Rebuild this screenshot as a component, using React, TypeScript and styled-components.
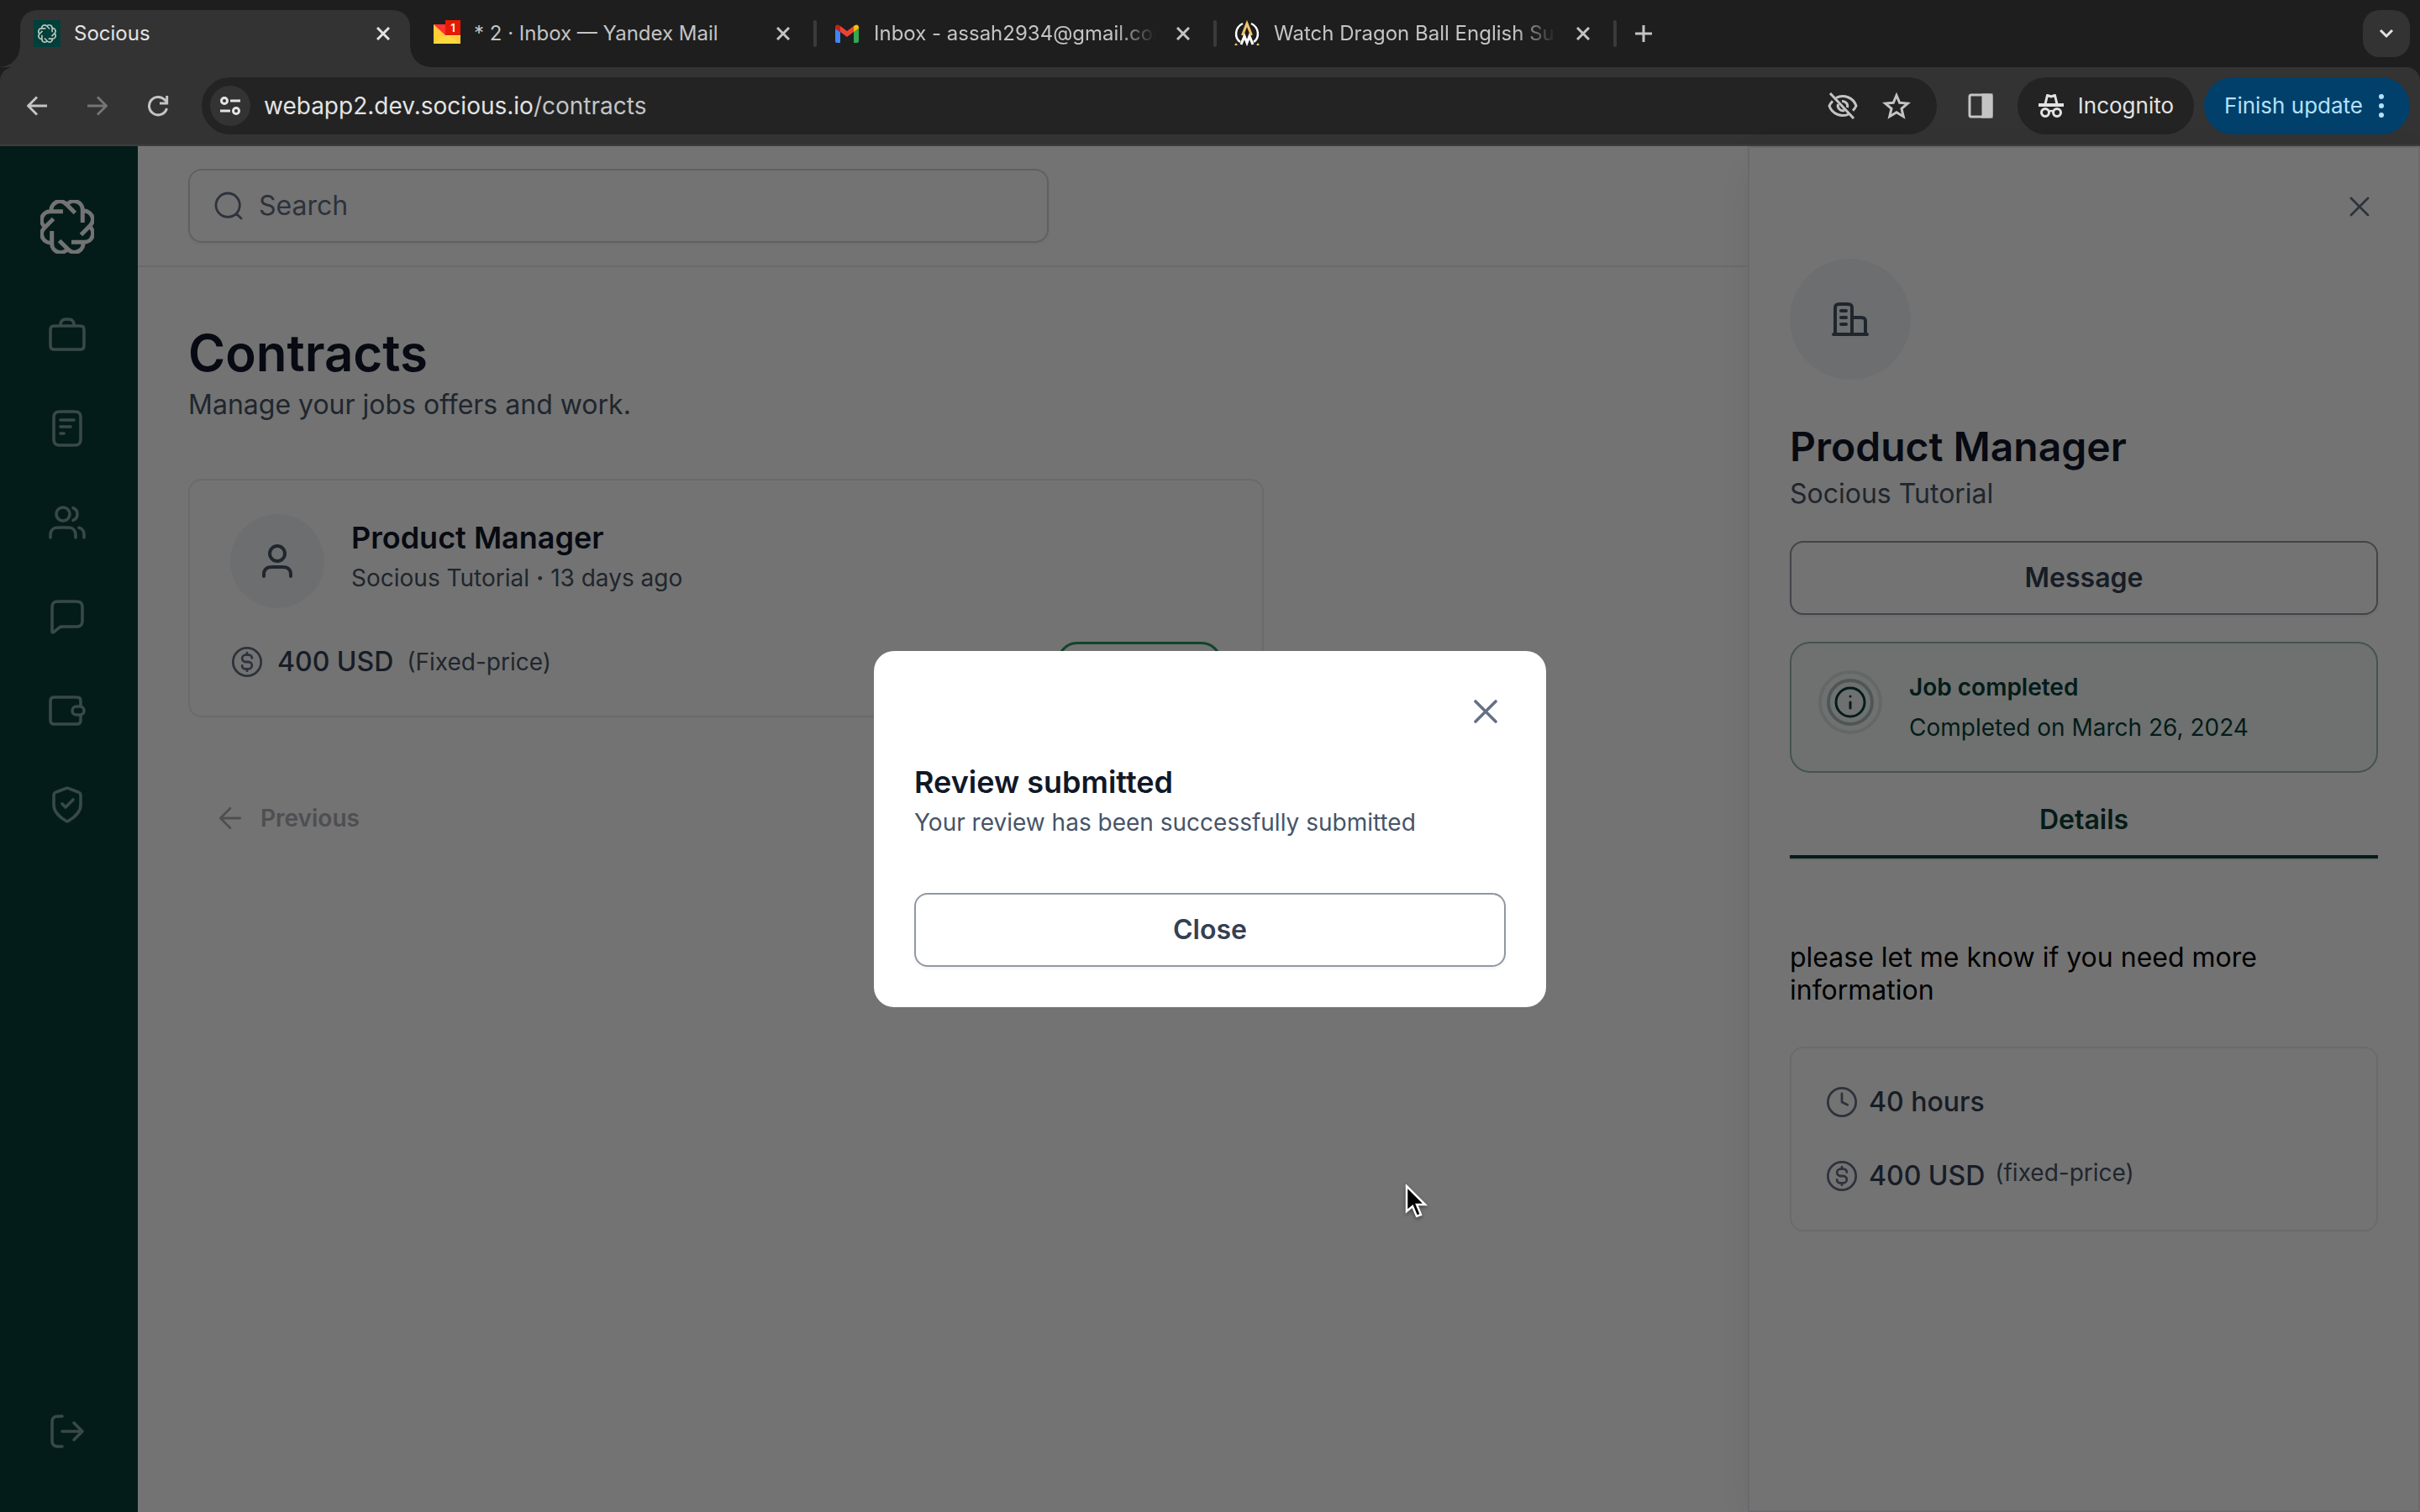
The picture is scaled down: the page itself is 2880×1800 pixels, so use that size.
import React from "react";
import styled, { createGlobalStyle, css } from "styled-components";

const color = {
  strip: "#1e1e1e",
  toolbar: "#333333",
  field: "#232323",
  chromeText: "#e3e3e3",
  chromeMuted: "#c4c4c4",
  gray900: "#101828",
  gray700: "#344054",
  gray600: "#475467",
  gray500: "#667085",
  gray400: "#9197a3",
  gray300: "#d0d5dd",
  gray200: "#eaecf0",
  gray100: "#f2f4f7",
  brand: "#093e38",
  brandIcon: "#7fa39e",
};

const GlobalStyle = createGlobalStyle`
  *, *::before, *::after { box-sizing: border-box; }
  body { margin: 0; font-family: Inter, "Liberation Sans", sans-serif; font-optical-sizing: none; background: #fff; }
  button, input { font: inherit; font-optical-sizing: none; }
  h1, h2, p { margin: 0; }
`;

const Shell = styled.div`
  display: grid;
  grid-template-rows: auto 1fr;
  min-height: 100vh;
`;

/* ---------- browser window ---------- */

const plainButton = css`
  display: inline-flex;
  align-items: center;
  justify-content: center;
  padding: 0;
  border: 0;
  background: none;
  color: inherit;
`;

const Browser = styled.header`
  background: ${color.strip};
  color: ${color.chromeMuted};
`;

const TabStrip = styled.div`
  display: flex;
  align-items: stretch;
  height: 80px;
  padding: 12px 12px 0 24px;
`;

const Tab = styled.div<{ $active?: boolean }>`
  position: relative;
  display: flex;
  align-items: center;
  gap: 16px;
  width: 464px;
  padding: 0 16px 12px;
  border-radius: 20px 20px 0 0;
  font-size: 24px;
  line-height: 32px;
  ${(p) =>
    p.$active &&
    css`
      background: ${color.toolbar};
      color: ${color.chromeText};
      &::before,
      &::after {
        content: "";
        position: absolute;
        bottom: 0;
        width: 24px;
        height: 24px;
      }
      &::before {
        right: 100%;
        background: radial-gradient(circle at 0 0, transparent 23px, ${color.toolbar} 24px);
      }
      &::after {
        left: 100%;
        background: radial-gradient(circle at 100% 0, transparent 23px, ${color.toolbar} 24px);
      }
    `}
`;

const TabTitle = styled.span<{ $fade?: boolean }>`
  flex: 1;
  min-width: 0;
  overflow: hidden;
  white-space: nowrap;
  ${(p) =>
    p.$fade &&
    css`
      mask-image: linear-gradient(to right, #000 calc(100% - 48px), transparent);
    `}
`;

const TabClose = styled.button`
  ${plainButton}
  width: 32px;
  height: 32px;
`;

const TabGap = styled.span<{ $line?: boolean }>`
  width: 4px;
  height: 32px;
  margin: 12px 4px 0;
  border-radius: 2px;
  background: ${(p) => (p.$line ? "#3a3a3a" : "transparent")};
`;

const NewTab = styled.button`
  ${plainButton}
  width: 56px;
  height: 56px;
`;

const TabSearch = styled.button`
  ${plainButton}
  width: 56px;
  height: 56px;
  margin-left: auto;
  border-radius: 20px;
  background: ${color.toolbar};
  color: ${color.chromeText};
`;

const Toolbar = styled.div`
  display: flex;
  align-items: center;
  height: 94px;
  padding: 0 12px 0 8px;
  border-bottom: 2px solid #3d3d3d;
  border-radius: 16px 16px 0 0;
  background: ${color.toolbar};
`;

const NavButton = styled.button<{ $off?: boolean }>`
  ${plainButton}
  width: 72px;
  height: 68px;
  color: ${(p) => (p.$off ? "#757575" : color.chromeMuted)};
`;

const AddressBar = styled.div`
  display: flex;
  flex: 1;
  align-items: center;
  height: 68px;
  margin-left: 16px;
  padding: 0 16px 0 10px;
  border-radius: 34px;
  background: ${color.field};
`;

const SiteInfo = styled.button`
  ${plainButton}
  width: 48px;
  height: 48px;
  border-radius: 50%;
  background: ${color.toolbar};
  color: ${color.chromeText};
`;

const Address = styled.a`
  flex: 1;
  padding-left: 16px;
  color: ${color.chromeMuted};
  font-size: 28px;
  line-height: 40px;
  text-decoration: none;
`;

const Host = styled.span`
  color: ${color.chromeText};
`;

const FieldButton = styled.button`
  ${plainButton}
  width: 64px;
  height: 48px;
`;

const PanelButton = styled.button`
  ${plainButton}
  width: 96px;
  height: 68px;
  padding-left: 8px;
`;

const Chip = styled.button<{ $update?: boolean }>`
  ${plainButton}
  gap: ${(p) => (p.$update ? 12 : 16)}px;
  height: 68px;
  padding: 0 24px;
  border-radius: 34px;
  background: ${(p) => (p.$update ? "#00406a" : color.field)};
  color: ${(p) => (p.$update ? "#b4e0fb" : color.chromeText)};
  font-size: 26px;
  line-height: 32px;
  white-space: nowrap;
  & + & {
    margin-left: 12px;
  }
`;

/* ---------- web page ---------- */

const Page = styled.div`
  position: relative;
  display: flex;
  background: #fff;
`;

const Sidebar = styled.nav`
  display: flex;
  flex-direction: column;
  align-items: center;
  width: 164px;
  padding: 64px 4px 48px 0;
  background: ${color.brand};
  color: ${color.brandIcon};
`;

const NavList = styled.div`
  display: flex;
  flex-direction: column;
  gap: 16px;
  margin-top: 48px;
`;

const NavLink = styled.a<{ $last?: boolean }>`
  display: flex;
  padding: 24px;
  margin-top: ${(p) => (p.$last ? "auto" : "0")};
  color: inherit;
`;

const Main = styled.main`
  flex: 1;
  min-width: 0;
`;

const TopBar = styled.div`
  display: flex;
  align-items: center;
  height: 144px;
  padding: 0 60px;
  border-bottom: 2px solid ${color.gray200};
`;

const SearchBox = styled.label`
  display: flex;
  align-items: center;
  gap: 16px;
  width: 100%;
  max-width: 1024px;
  height: 88px;
  padding: 0 26px;
  border: 2px solid ${color.gray300};
  border-radius: 16px;
  box-shadow: 0 2px 4px rgba(16, 24, 40, 0.05);
  color: ${color.gray500};
`;

const SearchInput = styled.input`
  flex: 1;
  min-width: 0;
  padding: 0;
  border: 0;
  outline: 0;
  background: none;
  color: ${color.gray900};
  font-size: 32px;
  line-height: 48px;
  &::placeholder {
    color: ${color.gray500};
    opacity: 1;
  }
`;

const Content = styled.section`
  padding: 64px 60px;
`;

const PageTitle = styled.h1`
  color: ${color.gray900};
  font-size: 60px;
  font-weight: 600;
  line-height: 76px;
`;

const Lead = styled.p`
  color: ${color.gray600};
  font-size: 32px;
  line-height: 48px;
`;

const Card = styled.article`
  display: flex;
  flex-direction: column;
  gap: 40px;
  border: 2px solid ${color.gray200};
  border-radius: 16px;
`;

const ContractCard = styled(Card)`
  max-width: 1280px;
  margin-top: 64px;
  padding: 40px 48px;
`;

const Row = styled.div<{ $gap: number; $top?: boolean }>`
  display: flex;
  align-items: ${(p) => (p.$top ? "flex-start" : "center")};
  gap: ${(p) => p.$gap}px;
  min-height: 48px;
`;

const Avatar = styled.span<{ $size: number }>`
  display: flex;
  align-items: center;
  justify-content: center;
  width: ${(p) => p.$size}px;
  height: ${(p) => p.$size}px;
  border-radius: 50%;
  background: ${color.gray100};
  color: ${color.gray600};
`;

const CardTitle = styled.h2`
  color: ${color.gray900};
  font-size: 36px;
  font-weight: 600;
  line-height: 56px;
`;

const Small = styled.p<{ $raised?: boolean }>`
  align-self: ${(p) => (p.$raised ? "flex-start" : "auto")};
  color: ${color.gray600};
  font-size: 28px;
  line-height: 40px;
`;

const Amount = styled.span`
  color: ${color.gray700};
  font-size: 32px;
  font-weight: 500;
  line-height: 48px;
`;

const IconBox = styled.span`
  display: flex;
  color: ${color.gray500};
`;

const StatusBadge = styled.span`
  width: 196px;
  height: 48px;
  margin-left: auto;
  border: 3px solid #249a5e;
  border-radius: 24px;
`;

const Previous = styled.button`
  ${plainButton}
  gap: 16px;
  height: 80px;
  margin-top: 80px;
  padding: 0 30px;
  color: #aeafb3;
  font-size: 28px;
  font-weight: 600;
  line-height: 40px;
`;

const Drawer = styled.aside`
  display: flex;
  flex-direction: column;
  width: 800px;
  padding: 48px;
  border: 2px solid ${color.gray200};
  box-shadow: 0 16px 48px rgba(16, 24, 40, 0.06);
`;

const DrawerClose = styled.button`
  ${plainButton}
  align-self: flex-end;
  width: 44px;
  height: 44px;
  margin-bottom: 40px;
  color: ${color.gray500};
`;

const DrawerTitle = styled.h2`
  margin-top: 48px;
  color: ${color.gray900};
  font-size: 48px;
  font-weight: 600;
  line-height: 64px;
`;

const OutlineButton = styled.button`
  ${plainButton}
  width: 100%;
  height: 88px;
  border: 2px solid ${color.gray400};
  border-radius: 16px;
  box-shadow: 0 2px 4px rgba(16, 24, 40, 0.05);
  color: ${color.gray700};
  font-size: 32px;
  font-weight: 600;
  line-height: 48px;
`;

const DrawerActions = styled.div`
  display: flex;
  flex-direction: column;
  gap: 32px;
  margin-top: 32px;
`;

const Alert = styled.div`
  display: flex;
  gap: 32px;
  padding: 32px;
  border: 2px solid #97bbb3;
  border-radius: 24px;
  background: #f4fbf8;
  color: ${color.brand};
`;

const AlertText = styled.div`
  display: flex;
  flex-direction: column;
  gap: 8px;
  font-size: 28px;
  line-height: 40px;
`;

const AlertTitle = styled.p`
  font-weight: 600;
`;

const TabBar = styled.div`
  display: flex;
  border-bottom: 2px solid ${color.gray200};
`;

const DetailsTab = styled.button`
  ${plainButton}
  flex: 1;
  padding-bottom: 18px;
  border-bottom: 4px solid ${color.brand};
  color: ${color.brand};
  font-size: 32px;
  font-weight: 600;
  line-height: 48px;
`;

const Description = styled.p`
  margin-top: 96px;
  color: #000;
  font-size: 32px;
  line-height: 39px;
`;

const TermsCard = styled(Card)`
  margin-top: 48px;
  padding: 40px;
`;

const Overlay = styled.div`
  position: absolute;
  inset: 0;
  display: flex;
  align-items: center;
  justify-content: center;
  background: rgba(0, 0, 0, 0.55);
`;

const Dialog = styled.section`
  display: flex;
  flex-direction: column;
  width: 800px;
  padding: 48px;
  border-radius: 24px;
  background: #fff;
`;

const DialogClose = styled.button`
  ${plainButton}
  align-self: flex-end;
  margin-bottom: 32px;
  color: ${color.gray500};
`;

const DialogActions = styled.div`
  margin-top: 64px;
`;

const Pointer = styled.svg`
  position: absolute;
  left: 1672px;
  top: 1236px;
  filter: drop-shadow(0 2px 2px rgba(0, 0, 0, 0.4));
`;

/* ---------- icons ---------- */

type IconProps = { size: number; d: string; weight?: number };

const Icon = ({ size, d, weight = 2 }: IconProps) => (
  <svg width={size} height={size} viewBox="0 0 24 24" fill="none" stroke="currentColor" strokeWidth={weight} strokeLinecap="round" strokeLinejoin="round" aria-hidden="true">
    <path d={d} />
  </svg>
);

const CIRCLE = "M22 12C22 17.5228 17.5228 22 12 22C6.47715 22 2 17.5228 2 12C2 6.47715 6.47715 2 12 2C17.5228 2 22 6.47715 22 12Z";

const paths = {
  close: "M18 6L6 18M6 6L18 18",
  search: "M21 21L17.5 17.5M20 11.5C20 16.1944 16.1944 20 11.5 20C6.80558 20 3 16.1944 3 11.5C3 6.80558 6.80558 3 11.5 3C16.1944 3 20 6.80558 20 11.5Z",
  briefcase:
    "M16 7C16 6.07003 16 5.60504 15.8978 5.22354C15.6204 4.18827 14.8117 3.37962 13.7765 3.10222C13.395 3 12.93 3 12 3C11.07 3 10.605 3 10.2235 3.10222C9.18827 3.37962 8.37962 4.18827 8.10222 5.22354C8 5.60504 8 6.07003 8 7M5.2 21H18.8C19.9201 21 20.4802 21 20.908 20.782C21.2843 20.5903 21.5903 20.2843 21.782 19.908C22 19.4802 22 18.9201 22 17.8V10.2C22 9.07989 22 8.51984 21.782 8.09202C21.5903 7.71569 21.2843 7.40973 20.908 7.21799C20.4802 7 19.9201 7 18.8 7H5.2C4.07989 7 3.51984 7 3.09202 7.21799C2.71569 7.40973 2.40973 7.71569 2.21799 8.09202C2 8.51984 2 9.07989 2 10.2V17.8C2 18.9201 2 19.4802 2.21799 19.908C2.40973 20.2843 2.71569 20.5903 3.09202 20.782C3.51984 21 4.0799 21 5.2 21Z",
  file:
    "M14 11H8M10 15H8M16 7H8M20 6.8V17.2C20 18.8802 20 19.7202 19.673 20.362C19.3854 20.9265 18.9265 21.3854 18.362 21.673C17.7202 22 16.8802 22 15.2 22H8.8C7.11984 22 6.27976 22 5.63803 21.673C5.07354 21.3854 4.6146 20.9265 4.32698 20.362C4 19.7202 4 18.8802 4 17.2V6.8C4 5.11984 4 4.27976 4.32698 3.63803C4.6146 3.07354 5.07354 2.6146 5.63803 2.32698C6.27976 2 7.11984 2 8.8 2H15.2C16.8802 2 17.7202 2 18.362 2.32698C18.9265 2.6146 19.3854 3.07354 19.673 3.63803C20 4.27976 20 5.11984 20 6.8Z",
  users:
    "M22 21V19C22 17.1362 20.7252 15.5701 19 15.126M15.5 3.29076C16.9659 3.88415 18 5.32131 18 7C18 8.67869 16.9659 10.1159 15.5 10.7092M17 21C17 19.1362 17 18.2044 16.6955 17.4693C16.2895 16.4892 15.5108 15.7105 14.5307 15.3045C13.7956 15 12.8638 15 11 15H8C6.13623 15 5.20435 15 4.46927 15.3045C3.48915 15.7105 2.71046 16.4892 2.30448 17.4693C2 18.2044 2 19.1362 2 21M13.5 7C13.5 9.20914 11.7091 11 9.5 11C7.29086 11 5.5 9.20914 5.5 7C5.5 4.79086 7.29086 3 9.5 3C11.7091 3 13.5 4.79086 13.5 7Z",
  message:
    "M3 7.8C3 6.11984 3 5.27976 3.32698 4.63803C3.6146 4.07354 4.07354 3.6146 4.63803 3.32698C5.27976 3 6.11984 3 7.8 3H16.2C17.8802 3 18.7202 3 19.362 3.32698C19.9265 3.6146 20.3854 4.07354 20.673 4.63803C21 5.27976 21 6.11984 21 7.8V13.2C21 14.8802 21 15.7202 20.673 16.362C20.3854 16.9265 19.9265 17.3854 19.362 17.673C18.7202 18 17.8802 18 16.2 18H9.68375C9.0597 18 8.74767 18 8.44921 18.0613C8.18443 18.1156 7.9282 18.2055 7.68749 18.3285C7.41617 18.4671 7.17252 18.662 6.68521 19.0518L4.29976 20.9602C3.88367 21.2931 3.67563 21.4595 3.50054 21.4597C3.34827 21.4599 3.20422 21.3906 3.10923 21.2716C3 21.1348 3 20.8684 3 20.3355V7.8Z",
  wallet:
    "M20 9.5V7.2C20 6.0799 20 5.51984 19.782 5.09202C19.5903 4.71569 19.2843 4.40973 18.908 4.21799C18.4802 4 17.9201 4 16.8 4H5.2C4.0799 4 3.51984 4 3.09202 4.21799C2.71569 4.40973 2.40973 4.71569 2.21799 5.09202C2 5.51984 2 6.0799 2 7.2V16.8C2 17.9201 2 18.4802 2.21799 18.908C2.40973 19.2843 2.71569 19.5903 3.09202 19.782C3.51984 20 4.0799 20 5.2 20H16.8C17.9201 20 18.4802 20 18.908 19.782C19.2843 19.5903 19.5903 19.2843 19.782 18.908C20 18.4802 20 17.9201 20 16.8V14.5M17.5 9.5H19.5A2.5 2.5 0 0 1 19.5 14.5H17.5A2.5 2.5 0 0 1 17.5 9.5Z",
  shield:
    "M9 11.5L11 13.5L15.5 9M20 12C20 16.9084 14.646 20.4784 12.698 21.6149C12.4766 21.744 12.3659 21.8086 12.2097 21.8421C12.0884 21.8681 11.9116 21.8681 11.7903 21.8421C11.6341 21.8086 11.5234 21.744 11.302 21.6149C9.35396 20.4784 4 16.9084 4 12V7.21759C4 6.41808 4 6.01833 4.13076 5.6747C4.24627 5.37113 4.43398 5.10027 4.67766 4.88552C4.9535 4.64243 5.3278 4.50207 6.0764 4.22134L11.4382 2.21067C11.6461 2.13271 11.75 2.09373 11.857 2.07827C11.9518 2.06457 12.0482 2.06457 12.143 2.07827C12.25 2.09373 12.3539 2.13271 12.5618 2.21067L17.9236 4.22134C18.6722 4.50207 19.0465 4.64243 19.3223 4.88552C19.566 5.10027 19.7537 5.37113 19.8692 5.6747C20 6.01833 20 6.41808 20 7.21759V12Z",
  logout:
    "M16 17L21 12M21 12L16 7M21 12H9M9 3H7.8C6.11984 3 5.27976 3 4.63803 3.32698C4.07354 3.6146 3.6146 4.07354 3.32698 4.63803C3 5.27976 3 6.11984 3 7.8V16.2C3 17.8802 3 18.7202 3.32698 19.362C3.6146 19.9265 4.07354 20.3854 4.63803 20.673C5.27976 21 6.11984 21 7.8 21H9",
  user:
    "M20 21C20 19.6044 20 18.9067 19.8278 18.3389C19.44 17.0605 18.4395 16.06 17.1611 15.6722C16.5933 15.5 15.8956 15.5 14.5 15.5H9.5C8.10444 15.5 7.40665 15.5 6.83886 15.6722C5.56045 16.06 4.56004 17.0605 4.17224 18.3389C4 18.9067 4 19.6044 4 21M16.5 7.5C16.5 9.98528 14.4853 12 12 12C9.51472 12 7.5 9.98528 7.5 7.5C7.5 5.01472 9.51472 3 12 3C14.4853 3 16.5 5.01472 16.5 7.5Z",
  building:
    "M13 11H17.8C18.9201 11 19.4802 11 19.908 11.218C20.2843 11.4097 20.5903 11.7157 20.782 12.092C21 12.5198 21 13.0799 21 14.2V21M13 21V6.2C13 5.0799 13 4.51984 12.782 4.09202C12.5903 3.71569 12.2843 3.40973 11.908 3.21799C11.4802 3 10.9201 3 9.8 3H6.2C5.0799 3 4.51984 3 4.09202 3.21799C3.71569 3.40973 3.40973 3.71569 3.21799 4.09202C3 4.51984 3 5.0799 3 6.2V21M22 21H2M6.5 7H9.5M6.5 11H9.5M6.5 15H9.5",
  dollar:
    "M8.5 14.6667C8.5 15.9553 9.54467 17 10.8333 17H13C14.3807 17 15.5 15.8807 15.5 14.5C15.5 13.1193 14.3807 12 13 12H11C9.61929 12 8.5 10.8807 8.5 9.5C8.5 8.11929 9.61929 7 11 7H13.1667C14.4553 7 15.5 8.04467 15.5 9.33333M12 5.5V7M12 17V18.5" + CIRCLE,
  clock: "M12 6V12L16 14" + CIRCLE,
  arrowLeft: "M19 12H5M5 12L12 19M5 12L12 5",
};

const turns = [0, 45, 90, 135, 180, 225, 270, 315];

const KnotLobes = () => (
  <>
    {turns.map((turn) => (
      <path key={turn} d="M-.8 -25.600A10.300 10.300 0 0 1 18.300 -20V-5" transform={`rotate(${turn})`} />
    ))}
  </>
);

const SociousLogo = () => (
  <svg width="64" height="64" viewBox="-32 -32 64 64" fill="none" stroke="#fff" strokeWidth="5" aria-hidden="true">
    <KnotLobes />
  </svg>
);

const SociousMark = () => (
  <svg width="32" height="32" viewBox="-48 -48 96 96" aria-hidden="true">
    <rect x="-48" y="-48" width="96" height="96" fill="#003f3a" />
    <g fill="none" stroke="#b9c4bd" strokeWidth="5">
      <KnotLobes />
    </g>
  </svg>
);

const YandexMark = () => (
  <svg width="32" height="32" viewBox="0 0 32 32" aria-hidden="true">
    <path d="M0 5H32V28H0Z" fill="#ffcc33" />
    <path d="M0 28L14 16L32 28Z" fill="#ffd83d" />
    <path d="M0 5H18L14 18Z" fill="#ff3333" />
    <path d="M14 0H32V18H14Z" fill="#e51a00" />
    <path d="M14 18H32V19H14Z" fill="#f5e6b0" />
    <text x="23" y="14" fill="#fff" fontSize="13" fontWeight="600" textAnchor="middle">
      1
    </text>
  </svg>
);

const GmailMark = () => (
  <svg width="32" height="32" viewBox="0 0 32 32" aria-hidden="true">
    <path d="M2 10V25Q2 27 4 27H8V14Z" fill="#4285f4" />
    <path d="M24 14V27H28Q30 27 30 25V10Z" fill="#34a853" />
    <path d="M8 7L16 13L24 7V14L16 20L8 14Z" fill="#ea4335" />
    <path d="M24 7L25.500 6C27.500 4.500 30 6 30 8.500V10L24 14Z" fill="#fbbc04" />
    <path d="M2 8.500C2 6 4.500 4.500 6.500 6L8 7V14L2 10Z" fill="#c5221f" />
  </svg>
);

const AnimeMark = () => (
  <svg width="32" height="32" viewBox="0 0 32 32" fill="none" aria-hidden="true">
    <path d="M11 4C1 9 1 21 8 26M21 4C31 9 31 21 24 26" stroke="#fff" strokeWidth="2.500" />
    <path d="M9 29L13 19L16 27L19 19L23 29" stroke="#fff" strokeWidth="3" />
    <path d="M10.500 18L16 4L21.500 18" stroke="#f3c468" strokeWidth="3" />
    <path d="M1 30L3 27L5 30ZM27 30L29 27L31 30Z" fill="#f3c468" />
  </svg>
);

const Incognito = () => (
  <svg width="32" height="32" viewBox="0 0 32 32" fill="none" stroke="currentColor" aria-hidden="true">
    <path d="M1 15H31" strokeWidth="4" />
    <path d="M9 14L11.500 3.500L16 5L20.500 3.500L23 14" strokeWidth="3" strokeLinejoin="round" />
    <circle cx="9" cy="24" r="4.500" strokeWidth="3" />
    <circle cx="23" cy="24" r="4.500" strokeWidth="3" />
    <path d="M13 23Q16 21 19 23" strokeWidth="2.500" />
  </svg>
);

const RingedInfo = () => (
  <svg width="76" height="76" viewBox="0 0 76 76" fill="none" stroke="currentColor" strokeLinecap="round" aria-hidden="true">
    <circle cx="38" cy="38" r="36" strokeWidth="4" opacity=".1" />
    <circle cx="38" cy="38" r="26" strokeWidth="4" opacity=".3" />
    <circle cx="38" cy="38" r="17" strokeWidth="3" />
    <path d="M38 38V45M38 31V31.100" strokeWidth="3" />
  </svg>
);

/* ---------- screen ---------- */

const tabs = [
  { title: "Socious", mark: <SociousMark />, active: true },
  { title: "* 2 · Inbox — Yandex Mail", mark: <YandexMark />, line: true },
  { title: "Inbox - assah2934@gmail.com", mark: <GmailMark />, line: true, fade: true },
  { title: "Watch Dragon Ball English Sub", mark: <AnimeMark />, line: true, fade: true },
];

const links = [
  { label: "Jobs", d: paths.briefcase },
  { label: "Contracts", d: paths.file },
  { label: "Communities", d: paths.users },
  { label: "Messages", d: paths.message },
  { label: "Payments", d: paths.wallet },
  { label: "Credentials", d: paths.shield },
];

const BrowserBar = () => (
  <Browser>
    <TabStrip>
      {tabs.map((tab) => (
        <React.Fragment key={tab.title}>
          <Tab $active={tab.active}>
            {tab.mark}
            <TabTitle $fade={tab.fade}>{tab.title}</TabTitle>
            <TabClose aria-label="Close tab">
              <svg width="16" height="16" viewBox="0 0 16 16" stroke="currentColor" strokeWidth="3" aria-hidden="true">
                <path d="M1 1L15 15M15 1L1 15" />
              </svg>
            </TabClose>
          </Tab>
          <TabGap $line={tab.line} />
        </React.Fragment>
      ))}
      <NewTab aria-label="New tab">
        <svg width="20" height="20" viewBox="0 0 20 20" stroke="currentColor" strokeWidth="3" aria-hidden="true">
          <path d="M10 0V20M0 10H20" />
        </svg>
      </NewTab>
      <TabSearch aria-label="Search tabs">
        <svg width="18" height="12" viewBox="0 0 18 12" fill="none" stroke="currentColor" strokeWidth="3" aria-hidden="true">
          <path d="M2 2L9 9L16 2" />
        </svg>
      </TabSearch>
    </TabStrip>
    <Toolbar>
      <NavButton aria-label="Back">
        <svg width="24" height="24" viewBox="0 0 24 24" fill="none" stroke="currentColor" strokeWidth="3" aria-hidden="true">
          <path d="M24 12H2M12 1.500L1.500 12L12 22.500" />
        </svg>
      </NavButton>
      <NavButton aria-label="Forward" $off>
        <svg width="24" height="24" viewBox="0 0 24 24" fill="none" stroke="currentColor" strokeWidth="3" aria-hidden="true">
          <path d="M0 12H22M12 1.500L22.500 12L12 22.500" />
        </svg>
      </NavButton>
      <NavButton aria-label="Reload">
        <svg width="26" height="26" viewBox="0 0 26 26" fill="none" stroke="currentColor" strokeWidth="3" aria-hidden="true">
          <path d="M23.500 16A10.700 10.700 0 1 1 21 5.800L23.500 8.500" />
          <path d="M23.700 1V10H15" />
        </svg>
      </NavButton>
      <AddressBar>
        <SiteInfo aria-label="Site information">
          <svg width="26" height="24" viewBox="0 0 26 24" fill="none" stroke="currentColor" strokeWidth="3" aria-hidden="true">
            <circle cx="6" cy="6" r="3.500" />
            <path d="M13 6H25M1 18H13" />
            <circle cx="20" cy="18" r="3.500" />
          </svg>
        </SiteInfo>
        <Address href="#contracts">
          <Host>webapp2.dev.socious.io</Host>/contracts
        </Address>
        <FieldButton aria-label="Third-party cookies blocked">
          <svg width="38" height="34" viewBox="0 0 38 34" fill="none" stroke="currentColor" strokeWidth="3" aria-hidden="true">
            <path d="M11 7.500A17 17 0 0 1 35 17A18 18 0 0 1 31 22.700M27 26.500A17 17 0 0 1 3 17A18 18 0 0 1 7 11.300" />
            <path d="M18 11.500A6 6 0 0 1 24.500 19M21 22.500A6 6 0 0 1 13.500 15" />
            <path d="M4 2L32 32" />
          </svg>
        </FieldButton>
        <FieldButton aria-label="Bookmark this tab">
          <svg width="34" height="32" viewBox="0 0 34 32" fill="none" stroke="currentColor" strokeWidth="3" aria-hidden="true">
            <path d="M17 3.500L20.700 12.300L30.300 13.100L23 19.400L25.200 28.700L17 23.800L8.800 28.700L11 19.400L3.700 13.100L13.300 12.300Z" />
          </svg>
        </FieldButton>
      </AddressBar>
      <PanelButton aria-label="Side panel">
        <svg width="30" height="30" viewBox="0 0 30 30" fill="none" stroke="currentColor" strokeWidth="3" aria-hidden="true">
          <rect x="2" y="2" width="26" height="26" rx="2" />
          <path d="M18 2H28V28H18Z" fill="currentColor" />
        </svg>
      </PanelButton>
      <Chip>
        <Incognito />
        Incognito
      </Chip>
      <Chip $update>
        Finish update
        <svg width="20" height="28" viewBox="0 0 20 28" fill="currentColor" aria-hidden="true">
          <circle cx="10" cy="3" r="3" />
          <circle cx="10" cy="14" r="3" />
          <circle cx="10" cy="25" r="3" />
        </svg>
      </Chip>
    </Toolbar>
  </Browser>
);

const ContractDrawer = () => (
  <Drawer>
    <DrawerClose aria-label="Close details">
      <Icon size={40} weight={1.67} d={paths.close} />
    </DrawerClose>
    <Avatar $size={144}>
      <Icon size={48} d={paths.building} />
    </Avatar>
    <DrawerTitle>Product Manager</DrawerTitle>
    <Lead>Socious Tutorial</Lead>
    <DrawerActions>
      <OutlineButton>Message</OutlineButton>
      <Alert>
        <RingedInfo />
        <AlertText>
          <AlertTitle>Job completed</AlertTitle>
          <p>Completed on March 26, 2024</p>
        </AlertText>
      </Alert>
      <TabBar>
        <DetailsTab>Details</DetailsTab>
      </TabBar>
    </DrawerActions>
    <Description>please let me know if you need more information</Description>
    <TermsCard>
      <Row $gap={12}>
        <IconBox>
          <Icon size={40} weight={1.67} d={paths.clock} />
        </IconBox>
        <Amount>40 hours</Amount>
      </Row>
      <Row $gap={12}>
        <IconBox>
          <Icon size={40} weight={1.67} d={paths.dollar} />
        </IconBox>
        <Amount>400 USD</Amount>
        <Small $raised>(fixed-price)</Small>
      </Row>
    </TermsCard>
  </Drawer>
);

const ReviewDialog = () => (
  <Overlay>
    <Dialog role="dialog" aria-labelledby="review-title">
      <DialogClose aria-label="Close dialog">
        <Icon size={48} weight={1.8} d={paths.close} />
      </DialogClose>
      <CardTitle id="review-title">Review submitted</CardTitle>
      <Small>Your review has been successfully submitted</Small>
      <DialogActions>
        <OutlineButton>Close</OutlineButton>
      </DialogActions>
    </Dialog>
  </Overlay>
);

export default function App() {
  return (
    <Shell>
      <GlobalStyle />
      <BrowserBar />
      <Page>
        <Sidebar>
          <SociousLogo />
          <NavList>
            {links.map((link) => (
              <NavLink key={link.label} href="#" aria-label={link.label}>
                <Icon size={48} weight={1.8} d={link.d} />
              </NavLink>
            ))}
          </NavList>
          <NavLink $last href="#" aria-label="Log out">
            <Icon size={48} weight={1.8} d={paths.logout} />
          </NavLink>
        </Sidebar>
        <Main>
          <TopBar>
            <SearchBox>
              <Icon size={40} weight={1.67} d={paths.search} />
              <SearchInput type="text" placeholder="Search" aria-label="Search" />
            </SearchBox>
          </TopBar>
          <Content>
            <PageTitle>Contracts</PageTitle>
            <Lead>Manage your jobs offers and work.</Lead>
            <ContractCard>
              <Row $gap={32} $top>
                <Avatar $size={112}>
                  <Icon size={48} d={paths.user} />
                </Avatar>
                <div>
                  <CardTitle>Product Manager</CardTitle>
                  <Small>
                    Socious Tutorial <b>·</b> 13 days ago
                  </Small>
                </div>
              </Row>
              <Row $gap={16}>
                <IconBox>
                  <Icon size={40} weight={1.67} d={paths.dollar} />
                </IconBox>
                <Amount>400 USD</Amount>
                <Small>(Fixed-price)</Small>
                <StatusBadge />
              </Row>
            </ContractCard>
            <Previous>
              <Icon size={40} weight={1.67} d={paths.arrowLeft} />
              Previous
            </Previous>
          </Content>
        </Main>
        <ContractDrawer />
        <ReviewDialog />
        <Pointer width="28" height="42" viewBox="0 0 28 42" aria-hidden="true">
          <path d="M2 2V32L9 26L14 38L19 36L14 24H24Z" fill="#000" stroke="#fff" strokeWidth="2.500" />
        </Pointer>
      </Page>
    </Shell>
  );
}
